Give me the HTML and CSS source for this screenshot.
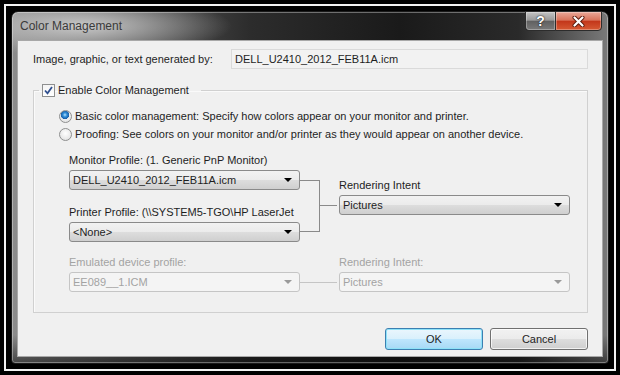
FILE: index.html
```html
<!DOCTYPE html>
<html lang="en">
<head>
    <meta charset="UTF-8">
    <title>Color Management</title>
    <link rel="stylesheet" href="styles.css">
</head>
<body>

<div class="screen">
    <div class="window">
        <div class="titlebar">
            <span class="title">Color Management</span>
            <div class="caption-buttons">
                <span class="cap-btn help">?</span>
                <span class="cap-btn close">
                    <svg width="13" height="11" viewBox="0 0 13 11">
                        <path d="M2.5 1.5 L10.5 9.5 M10.5 1.5 L2.5 9.5" stroke="#5a1a0c" stroke-width="4" stroke-linecap="round"/>
                        <path d="M2.5 1.5 L10.5 9.5 M10.5 1.5 L2.5 9.5" stroke="#fff" stroke-width="2.2" stroke-linecap="round"/>
                    </svg>
                </span>
            </div>
        </div>

        <div class="client">
            <div class="source-row">
                <span class="source-label">Image, graphic, or text generated by:</span>
                <div class="readonly-field">DELL_U2410_2012_FEB11A.icm</div>
            </div>

            <fieldset class="group">
                <legend class="group-legend">
                    <span class="checkbox">
                        <svg width="11" height="11" viewBox="0 0 11 11">
                            <path d="M2 5.5 L4.5 8.3 L9 2" fill="none" stroke="#2f4f8f" stroke-width="1.8"/>
                        </svg>
                    </span>
                    Enable Color Management
                </legend>

                <div class="radio-row"><span class="radio checked"></span>Basic color management: Specify how colors appear on your monitor and printer.</div>
                <div class="radio-row"><span class="radio"></span>Proofing: See colors on your monitor and/or printer as they would appear on another device.</div>

                <div class="profiles">
                    <div class="left-col">
                        <div class="field-label">Monitor Profile: (1. Generic PnP Monitor)</div>
                        <div class="combo">DELL_U2410_2012_FEB11A.icm<span class="arrow"></span></div>
                        <div class="field-label second">Printer Profile: (\\SYSTEM5-TGO\HP LaserJet</div>
                        <div class="combo">&lt;None&gt;<span class="arrow"></span></div>
                    </div>
                    <div class="bracket"></div>
                    <div class="connector"></div>
                    <div class="right-col">
                        <div class="field-label">Rendering Intent</div>
                        <div class="combo">Pictures<span class="arrow"></span></div>
                    </div>
                </div>

                <div class="profiles disabled">
                    <div class="left-col">
                        <div class="field-label">Emulated device profile:</div>
                        <div class="combo">EE089__1.ICM<span class="arrow"></span></div>
                    </div>
                    <div class="connector long"></div>
                    <div class="right-col flat">
                        <div class="field-label">Rendering Intent:</div>
                        <div class="combo">Pictures<span class="arrow"></span></div>
                    </div>
                </div>
            </fieldset>

            <div class="buttons">
                <span class="btn default">OK</span>
                <span class="btn">Cancel</span>
            </div>
        </div>
    </div>
</div>

</body>
</html>
```

FILE: styles.css
```css
body {
    margin: 0;
    background-color: #000;
    font-family: "Liberation Sans", Arial, sans-serif;
    font-size: 11px;
    color: #1e1e1e;
}
.screen {
    width: 612px;
    height: 367px;
    margin: 4px;
    padding: 5px;
    border: 2px solid #f2f2f2;
    box-sizing: border-box;
}
.window {
    height: 100%;
    box-sizing: border-box;
    display: flex;
    flex-direction: column;
    padding: 0 5px 6px;
    border: 1px solid #1a1a1a;
    border-radius: 7px 7px 4px 4px;
    box-shadow: inset 0 0 0 1px rgba(255, 255, 255, 0.35);
    background:
        radial-gradient(ellipse 150px 30px at 70px 14px, rgba(205, 205, 205, 0.95), rgba(205, 205, 205, 0) 100%),
        linear-gradient(to bottom, rgba(0, 0, 0, 0) 0, rgba(0, 0, 0, 0) 92%, rgba(0, 0, 0, 0.5) 100%),
        linear-gradient(to right, #8c8c8c 0%, #5c5c5c 18%, #2c2c2c 40%, #1a1a1a 65%, #2a2a2a 85%, #7a7a7a 100%);
}
.titlebar {
    height: 28px;
    margin: 0 -5px;
    padding: 0 6px 0 8px;
    display: flex;
    justify-content: space-between;
    align-items: flex-start;
}
.title {
    font-size: 12px;
    line-height: 28px;
    color: #3a3a3a;
}
.caption-buttons {
    display: flex;
    margin-top: -1px;
}
.cap-btn {
    height: 20px;
    display: flex;
    align-items: center;
    justify-content: center;
    box-sizing: border-box;
    border: 1px solid #2c2c2c;
    box-shadow: inset 0 0 0 1px rgba(255, 255, 255, 0.3);
}
.help {
    width: 30px;
    border-right: none;
    border-radius: 0 0 0 4px;
    color: #fff;
    font-weight: bold;
    font-size: 14px;
    text-shadow: 0 0 2px #222, 0 0 1px #222;
    background: linear-gradient(to bottom, #c4c4c4 0%, #9a9a9a 45%, #616161 52%, #7a7a7a 100%);
}
.close {
    width: 47px;
    border-radius: 0 0 4px 0;
    background: linear-gradient(to bottom, #eaa898 0%, #d8735b 45%, #c3371b 52%, #d65a34 100%);
}
.client {
    flex: 1;
    background-color: #f0f0f0;
    border: 1px solid #a8a8a8;
    padding: 8px 14px 0 15px;
}
.source-row {
    display: flex;
    align-items: center;
    justify-content: space-between;
}
.readonly-field {
    width: 357px;
    height: 20px;
    box-sizing: border-box;
    padding: 0 3px;
    line-height: 18px;
    border: 1px solid #dadada;
    background-color: #f2f2f2;
}
.group {
    margin: 14px 0 0;
    padding: 10px 0 20px 25px;
    border: 1px solid #d0d0d0;
    box-shadow: inset 1px 1px 0 #fafafa;
}
.group-legend {
    margin-left: -20px;
    padding: 0 12px 0 3px;
    display: flex;
    align-items: center;
    gap: 3px;
    line-height: 14px;
}
.checkbox {
    width: 13px;
    height: 13px;
    box-sizing: border-box;
    border: 1px solid #8e8f8f;
    background: linear-gradient(to bottom, #f4f4f4, #ffffff);
    display: flex;
    align-items: center;
    justify-content: center;
}
.radio-row {
    display: flex;
    align-items: center;
    gap: 3px;
    height: 18px;
}
.radio {
    width: 13px;
    height: 13px;
    box-sizing: border-box;
    border-radius: 50%;
    border: 1px solid #8e8f8f;
    background: radial-gradient(circle at 50% 40%, #ffffff, #dcdcdc);
}
.radio.checked {
    background:
        radial-gradient(circle at 45% 35%, #b9e0fb 0, #2f8ed8 2px, #1b5fa8 4px, rgba(0, 0, 0, 0) 4.5px),
        radial-gradient(circle at 50% 40%, #ffffff, #dcdcdc);
}
.profiles {
    display: flex;
    margin: 10px 0 0 10px;
}
.profiles.disabled {
    margin-top: 13px;
    color: #a3a3a3;
}
.left-col, .right-col {
    width: 231px;
}
.right-col {
    margin: 25px 0 0 2px;
}
.right-col.flat {
    margin-top: 0;
}
.field-label {
    line-height: 14px;
    margin-bottom: 3px;
}
.field-label.second {
    margin-top: 15px;
}
.combo {
    position: relative;
    height: 20px;
    box-sizing: border-box;
    padding: 0 3px;
    line-height: 18px;
    border: 1px solid #8a8a8a;
    border-radius: 3px;
    background: linear-gradient(to bottom, #f2f2f2 0%, #ebebeb 50%, #dddddd 51%, #cfcfcf 100%);
}
.disabled .combo {
    border-color: #c5c5c5;
    background: #f4f4f4;
}
.arrow {
    position: absolute;
    right: 7px;
    top: 7px;
    border-left: 4px solid transparent;
    border-right: 4px solid transparent;
    border-top: 4px solid #000;
}
.disabled .arrow {
    border-top-color: #9a9a9a;
}
.bracket {
    width: 19px;
    height: 50px;
    margin-top: 27px;
    border: 1px solid #8a8a8a;
    border-left: none;
}
.connector {
    width: 17px;
    margin-top: 52px;
    height: 0;
    border-top: 1px solid #8a8a8a;
}
.connector.long {
    width: 37px;
    margin-top: 27px;
    border-top-color: #c5c5c5;
}
.buttons {
    display: flex;
    justify-content: flex-end;
    gap: 7px;
    margin-top: 15px;
}
.btn {
    width: 98px;
    height: 22px;
    box-sizing: border-box;
    text-align: center;
    line-height: 20px;
    border: 1px solid #707070;
    border-radius: 3px;
    background: linear-gradient(to bottom, #f2f2f2 0%, #ebebeb 50%, #dddddd 51%, #cfcfcf 100%);
    box-shadow: inset 0 0 0 1px rgba(255, 255, 255, 0.7);
}
.btn.default {
    border-color: #3c7fb1;
    background: linear-gradient(to bottom, #eaf6fd 0%, #d9f0fc 50%, #bee6fd 51%, #a7d9f5 100%);
    box-shadow: inset 0 0 0 1px #8ee2f8;
}
```
